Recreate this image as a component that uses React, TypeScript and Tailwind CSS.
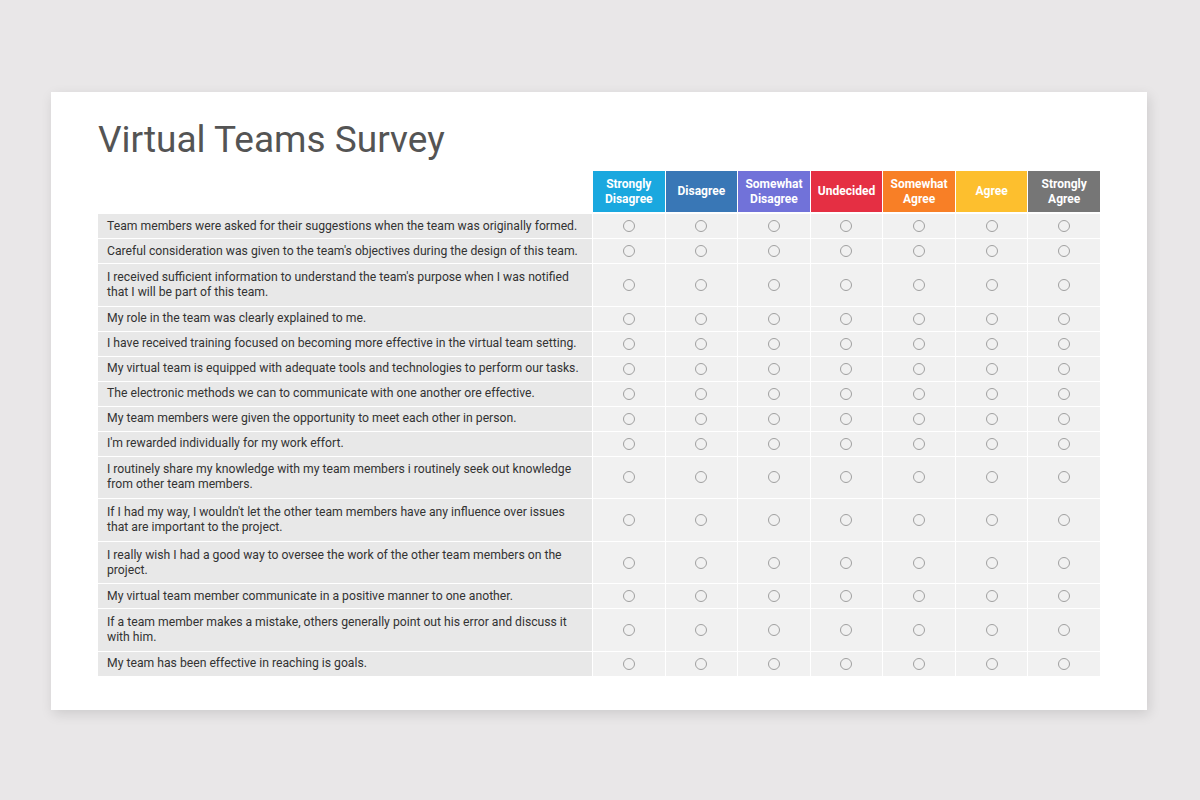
export default function App() {
  // rating scale, left to right
  const scale = [
    { label: ["Strongly", "Disagree"], color: "bg-[#1aa8df]" },
    { label: ["Disagree"], color: "bg-[#3977b6]" },
    { label: ["Somewhat", "Disagree"], color: "bg-[#7172d9]" },
    { label: ["Undecided"], color: "bg-[#e52f43]" },
    { label: ["Somewhat", "Agree"], color: "bg-[#f87f26]" },
    { label: ["Agree"], color: "bg-[#fdbf2e]" },
    { label: ["Strongly", "Agree"], color: "bg-[#767676]" },
  ];

  const questions = [
    { text: "Team members were asked for their suggestions when the team was originally formed.", tall: false },
    { text: "Careful consideration was given to the team's objectives during the design of this team.", tall: false },
    { text: "I received sufficient information to understand the team's purpose when I was notified that I will be part of this team.", tall: true },
    { text: "My role in the team was clearly explained to me.", tall: false },
    { text: "I have received training focused on becoming more effective in the virtual team setting.", tall: false },
    { text: "My virtual team is equipped with adequate tools and technologies to perform our tasks.", tall: false },
    { text: "The electronic methods we can to communicate with one another ore effective.", tall: false },
    { text: "My team members were given the opportunity to meet each other in person.", tall: false },
    { text: "I'm rewarded individually for my work effort.", tall: false },
    { text: "I routinely share my knowledge with my team members i routinely seek out knowledge from other team members.", tall: true },
    { text: "If I had my way, I wouldn't let the other team members have any influence over issues that are important to the project.", tall: true },
    { text: "I really wish I had a good way to oversee the work of the other team members on the project.", tall: true },
    { text: "My virtual team member communicate in a positive manner to one another.", tall: false },
    { text: "If a team member makes a mistake, others generally point out his error and discuss it with him.", tall: true },
    { text: "My team has been effective in reaching is goals.", tall: false },
  ];

  return (
    <div
      className="w-[1200px] h-[800px] bg-[#e9e7e8] pt-[92px] pl-[51px]"
      style={{ fontFamily: "Roboto, 'Liberation Sans', sans-serif" }}
    >
      <div className="w-[1096px] h-[618px] bg-white shadow-[2px_4px_12px_rgba(0,0,0,0.12)] px-[47px] pt-[26px]">
        <h1 className="text-[37px] leading-[44px] text-[#545454] font-normal">
          Virtual Teams Survey
        </h1>

        <div className="mt-[9px] grid grid-cols-[494px_repeat(7,1fr)] gap-x-px gap-y-px w-[1002px]">
          {/* header */}
          <div className="h-[41px] mb-px" />
          {scale.map((s, i) => (
            <div
              key={i}
              className={`h-[41px] mb-px ${s.color} flex flex-col items-center justify-center text-white font-bold text-[12px] leading-[15px] text-center`}
            >
              {s.label.map((l) => (
                <span key={l}>{l}</span>
              ))}
            </div>
          ))}

          {/* rows */}
          {questions.map((q, r) => (
            <div key={r} className="contents">
              <div
                className={`${q.tall ? "h-[41.6px]" : "h-[24px]"} bg-[#e8e8e8] pl-[9px] pr-[6px] flex items-center text-[12.2px] leading-[15px] text-[#333]`}
              >
                {q.text}
              </div>
              {scale.map((_, c) => (
                <div
                  key={c}
                  className={`${q.tall ? "h-[41.6px]" : "h-[24px]"} bg-[#f1f1f1] flex items-center justify-center`}
                >
                  <span className="w-[12px] h-[12px] rounded-full border border-[#a0a0a0]" />
                </div>
              ))}
            </div>
          ))}
        </div>
      </div>
    </div>
  );
}
